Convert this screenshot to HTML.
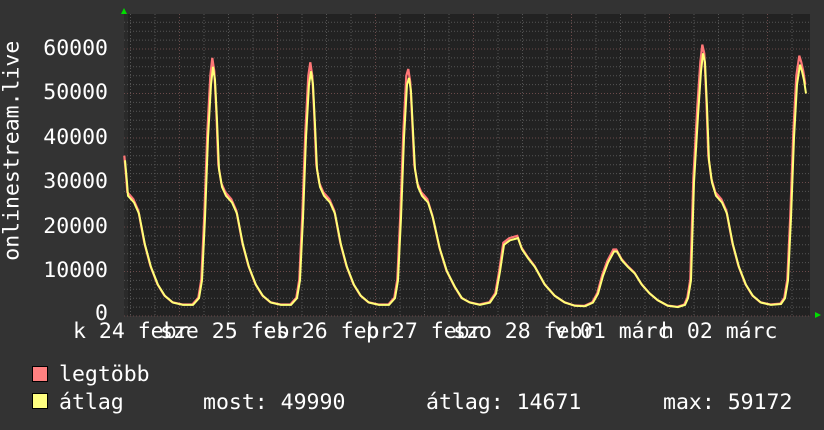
<!DOCTYPE html>
<html><head><meta charset="utf-8"><style>
body{margin:0;background:#333;width:824px;height:430px;overflow:hidden;font-family:"DejaVu Sans Mono","Liberation Mono",monospace;color:#fff}
.t{position:absolute;font-size:21.5px;white-space:pre;line-height:1}
.y{position:absolute;font-size:21.5px;line-height:1;right:716px;text-align:right}
</style></head><body>
<svg id="s" width="824" height="430" style="position:absolute;left:0;top:0">
<rect x="124" y="14" width="686" height="302" fill="#222"/>
<rect x="124" y="14" width="4" height="302" fill="#2a2a2a"/>
<g id="grid"></g>
<polyline id="rmax" fill="none" stroke="#ff7777" stroke-width="2.2"/>
<polyline id="ravg" fill="none" stroke="#ffff77" stroke-width="2"/>
<polygon points="121,14 127,14 124,8" fill="#0d0"/>
<polygon points="815,312 815,318 821,315" fill="#0d0"/>
</svg>
<div class="y" style="top:38px">60000</div>
<div class="y" style="top:82px">50000</div>
<div class="y" style="top:127px">40000</div>
<div class="y" style="top:171px">30000</div>
<div class="y" style="top:216px">20000</div>
<div class="y" style="top:260px">10000</div>
<div class="y" style="top:303px">0</div>
<div class="t" style="left:-78px;top:160px;width:180px;text-align:center;transform:rotate(-90deg)">onlinestream.live</div>
<div class="t" style="left:73px;top:321px">k 24 febr</div>
<div class="t" style="left:160px;top:321px">sze 25 febr</div>
<div class="t" style="left:263px;top:321px">cs 26 febr</div>
<div class="t" style="left:366px;top:321px">p 27 febr</div>
<div class="t" style="left:453px;top:321px">szo 28 febr</div>
<div class="t" style="left:554px;top:321px">v 01 márc</div>
<div class="t" style="left:661px;top:321px">h 02 márc</div>
<div style="position:absolute;left:32px;top:366px;width:14px;height:14px;background:#ff8080;border:1px solid #000"></div>
<div style="position:absolute;left:32px;top:393px;width:14px;height:14px;background:#ffff80;border:1px solid #000"></div>
<div class="t" style="left:59px;top:364px">legtöbb</div>
<div class="t" style="left:59px;top:392px">átlag</div>
<div class="t" style="left:203px;top:392px">most: 49990</div>
<div class="t" style="left:426px;top:392px">átlag: 14671</div>
<div class="t" style="left:663px;top:392px">max: 59172</div>
<script>
var g=document.getElementById('grid'),h='';
function Y(v){return 316-v*0.00445;}
for(var v=0;v<=66000;v+=2000){var y=Y(v);if(y<14)break;h+='<line x1="124" x2="810" y1="'+y+'" y2="'+y+'" stroke="'+(v%10000==0?'#6a4a4a':'#555')+'" stroke-dasharray="1,2"/>';}
for(var x=130.5;x<810;x+=24.5){var d=Math.abs(((x-179)/98)-Math.round((x-179)/98))<0.05;h+='<line y1="14" y2="316" x1="'+x+'" x2="'+x+'" stroke="'+(d?'#6a4a4a':'#555')+'" stroke-dasharray="1,2"/>';}
g.innerHTML=h;
var T=[[-92,33000],[-89,29000],[-85,27000],[-79,25500],[-74,23000],[-68,16000],[-62,11000],[-55,7000],[-48,4500],[-40,3000],[-30,2500],[-20,2500],[-14,4000],[-11,8000],[-8,22000],[-5,40000],[-2,52000],[0,0],[2,-3000],[4,-12000]];
var pts=[[125,35000],[127,30000]];
function day(px,P){T.forEach(function(a){var x=px+a[0];if(x<128)return;var v=a[0]==0?P:(a[0]>0?P+a[1]:a[1]);pts.push([x,v]);});}
day(213,56000);day(311,55000);day(409,53500);
[[415,33000],[418,29000],[422,27000],[428,25500],[433,22000],[440,15000],[447,10000],[455,6500],[462,4000],[470,3000],[480,2500],[490,3000],[496,5000],[500,10000],[504,16000],[510,17000],[518,17500],[522,15000],[528,13000],[535,11000],[545,7000],[555,4500],[565,3000],[575,2300],[585,2200],[593,3000],[598,5000],[603,9000],[608,12000],[614,14500],[617,14500],[622,12500],[628,11000],[635,9500],[642,7000],[650,5000],[658,3500],[668,2300],[678,2000],[685,2500],[688,4000],[691,8000]].forEach(function(p){pts.push(p)});
[[694,30000],[698,45000],[701,55000],[703,59000],[705,57000],[707,47000],[709,35000],[712,30000],[716,27000],[722,25500],[727,23000],[733,16000],[739,11000],[746,7000],[753,4500],[761,3000],[771,2500],[781,2700],[785,4000],[788,8000],[791,22000],[794,40000],[797,52000],[800,56500],[802,55000],[804,53000],[806,50000]].forEach(function(p){pts.push(p)});
var a='',r='';
pts.forEach(function(p){var v=p[1];a+=p[0]+','+Y(v).toFixed(1)+' ';var rv=v>40000?v+2000:v*1.03;r+=(p[0]-0.7)+','+Y(rv).toFixed(1)+' ';});
document.getElementById('ravg').setAttribute('points',a);
document.getElementById('rmax').setAttribute('points',r);
</script>
</body></html>
